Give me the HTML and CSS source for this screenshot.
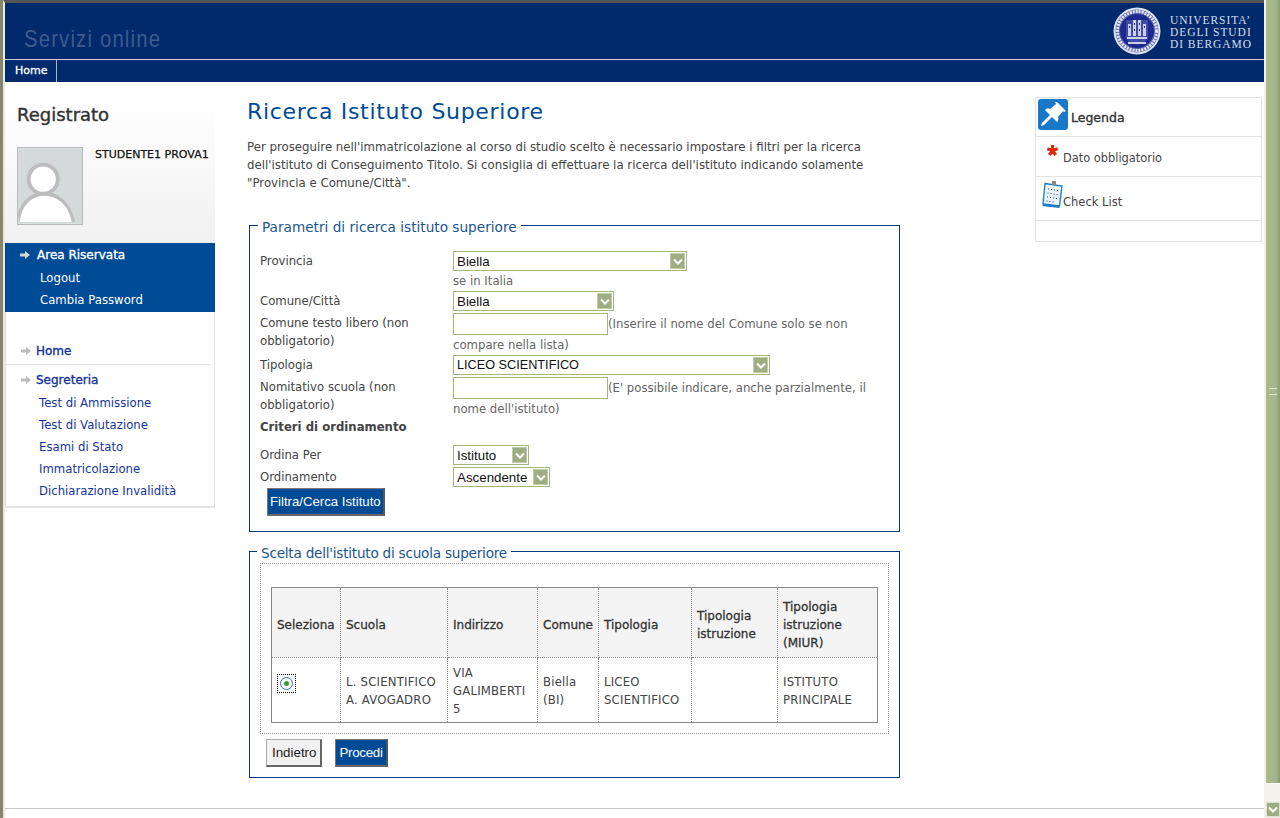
FILE: index.html
```html
<!DOCTYPE html>
<html lang="it">
<head>
<meta charset="utf-8">
<title>Ricerca Istituto Superiore</title>
<link rel="stylesheet" href="styles.css">
</head>
<body>
<div class="window">
  <div class="viewport">
    <header class="masthead">
      <div class="brand-row">
        <div class="service-name">Servizi online</div>
        <div class="uni">
          <svg class="seal" viewBox="0 0 48 48" width="48" height="48" aria-hidden="true">
            <circle cx="24" cy="24" r="23.500" fill="#dfe3f2"/>
            <circle cx="24" cy="24" r="21.500" fill="#5b64ad"/>
            <circle cx="24" cy="24" r="19.500" fill="none" stroke="#e6e8f4" stroke-width="3" stroke-dasharray="2 1"/>
            <circle cx="24" cy="24" r="17" fill="#1c2a8e"/>
            <path d="M13 13h22v17c0 4-6 6-11 8-5-2-11-4-11-8z" fill="#3e4aa3"/>
            <path d="M15 17h3v12h-3zM20 13h3v16h-3zM25 13h3v16h-3zM30 17h3v12h-3zM14 30h20v2H14zM15 35h18v2H15z" fill="#c9cee9"/>
            <path d="M16 19h1v2h-1zM21 16h1v2h-1zM26 16h1v2h-1zM31 19h1v2h-1zM21 22h1v2h-1zM26 22h1v2h-1z" fill="#1c2a8e"/>
          </svg>
          <div class="uni-name">UNIVERSITA’<br>DEGLI STUDI<br>DI BERGAMO</div>
        </div>
      </div>
      <nav class="topnav"><a class="topnav-item">Home</a></nav>
    </header>

    <div class="columns">
      <aside class="side">
        <div class="profile">
          <h2 class="profile-title">Registrato</h2>
          <div class="profile-body">
            <svg class="avatar" viewBox="0 0 66 78" width="66" height="78" aria-hidden="true">
              <rect width="66" height="78" fill="#d4d9d9"/>
              <circle cx="26" cy="32" r="15" fill="#fff" stroke="#bdbdbd" stroke-width="4"/>
              <path d="M2 76c1-17 12-27 25-27s26 10 28 27z" fill="#fff"/>
              <path d="M2 76c1-17 12-27 25-27 15 0 25 10 29 27h3C55 58 43 45 27 45 12 45 1 58 0 70z" fill="#bdbdbd"/>
            </svg>
            <div class="student">STUDENTE1 PROVA1</div>
          </div>
        </div>
        <ul class="reserved">
          <li class="reserved-head"><svg class="arrow" viewBox="0 0 10 8" width="10" height="8"><path d="M0 2.500h5V0l5 4-5 4V5.500H0z" fill="#d5d5d5"/></svg>Area Riservata</li>
          <li class="reserved-link">Logout</li>
          <li class="reserved-link">Cambia Password</li>
        </ul>
        <div class="menu">
          <div class="menu-head menu-head-home"><svg class="arrow" viewBox="0 0 10 8" width="10" height="8"><path d="M0 2.500h5V0l5 4-5 4V5.500H0z" fill="#bdbdbd"/></svg>Home</div>
          <div class="menu-head menu-head-seg"><svg class="arrow" viewBox="0 0 10 8" width="10" height="8"><path d="M0 2.500h5V0l5 4-5 4V5.500H0z" fill="#bdbdbd"/></svg>Segreteria</div>
          <a class="menu-link">Test di Ammissione</a>
          <a class="menu-link">Test di Valutazione</a>
          <a class="menu-link">Esami di Stato</a>
          <a class="menu-link">Immatricolazione</a>
          <a class="menu-link">Dichiarazione Invalidità</a>
        </div>
      </aside>

      <main class="content">
        <h1 class="page-title">Ricerca Istituto Superiore</h1>
        <p class="intro">Per proseguire nell'immatricolazione al corso di studio scelto è necessario impostare i filtri per la ricerca dell'istituto di Conseguimento Titolo. Si consiglia di effettuare la ricerca dell'istituto indicando solamente "Provincia e Comune/Città".</p>

        <fieldset class="box box-filter">
          <legend>Parametri di ricerca istituto superiore</legend>
          <div class="form-row row-prov">
            <label class="lab">Provincia</label>
            <div class="field">
              <div class="select w-234"><span>Biella</span><i class="chev"><svg viewBox="0 0 10 7" width="10" height="7"><path d="M1 1.500l4 4 4-4" fill="none" stroke="#fff" stroke-width="2"/></svg></i></div>
              <div class="hint">se in Italia</div>
            </div>
          </div>
          <div class="form-row row-com">
            <label class="lab">Comune/Città</label>
            <div class="field"><div class="select w-161"><span>Biella</span><i class="chev"><svg viewBox="0 0 10 7" width="10" height="7"><path d="M1 1.500l4 4 4-4" fill="none" stroke="#fff" stroke-width="2"/></svg></i></div></div>
          </div>
          <div class="form-row row-free">
            <label class="lab">Comune testo libero (non obbligatorio)</label>
            <div class="field hint-flow"><span class="input"></span>(Inserire il nome del Comune solo se non compare nella lista)</div>
          </div>
          <div class="form-row row-tip">
            <label class="lab">Tipologia</label>
            <div class="field"><div class="select w-317"><span>LICEO SCIENTIFICO</span><i class="chev"><svg viewBox="0 0 10 7" width="10" height="7"><path d="M1 1.500l4 4 4-4" fill="none" stroke="#fff" stroke-width="2"/></svg></i></div></div>
          </div>
          <div class="form-row row-free">
            <label class="lab">Nomitativo scuola (non obbligatorio)</label>
            <div class="field hint-flow"><span class="input"></span>(E' possibile indicare, anche parzialmente, il nome dell'istituto)</div>
          </div>
          <div class="criteria">Criteri di ordinamento</div>
          <div class="form-row row-ord">
            <label class="lab">Ordina Per</label>
            <div class="field"><div class="select w-76"><span>Istituto</span><i class="chev"><svg viewBox="0 0 10 7" width="10" height="7"><path d="M1 1.500l4 4 4-4" fill="none" stroke="#fff" stroke-width="2"/></svg></i></div></div>
          </div>
          <div class="form-row row-ord">
            <label class="lab">Ordinamento</label>
            <div class="field"><div class="select w-97"><span>Ascendente</span><i class="chev"><svg viewBox="0 0 10 7" width="10" height="7"><path d="M1 1.500l4 4 4-4" fill="none" stroke="#fff" stroke-width="2"/></svg></i></div></div>
          </div>
          <button class="btn btn-blue btn-filter" type="button">Filtra/Cerca Istituto</button>
        </fieldset>

        <fieldset class="box box-choice">
          <legend>Scelta dell'istituto di scuola superiore</legend>
          <div class="dotted">
            <table class="results">
              <thead>
                <tr><th class="c1">Seleziona</th><th class="c2">Scuola</th><th class="c3">Indirizzo</th><th class="c4">Comune</th><th class="c5">Tipologia</th><th class="c6">Tipologia istruzione</th><th class="c7">Tipologia istruzione (MIUR)</th></tr>
              </thead>
              <tbody>
                <tr>
                  <td class="radio-cell"><span class="radio"><span class="radio-ring"><span class="radio-dot"></span></span></span></td>
                  <td>L. SCIENTIFICO A. AVOGADRO</td>
                  <td>VIA GALIMBERTI 5</td>
                  <td>Biella (BI)</td>
                  <td>LICEO SCIENTIFICO</td>
                  <td></td>
                  <td>ISTITUTO PRINCIPALE</td>
                </tr>
              </tbody>
            </table>
          </div>
          <div class="actions">
            <button class="btn btn-light" type="button">Indietro</button>
            <button class="btn btn-blue" type="button">Procedi</button>
          </div>
        </fieldset>
      </main>

      <aside class="legend">
        <div class="legend-row legend-head">
          <svg class="pin" viewBox="0 0 30 31" width="30" height="31" aria-hidden="true">
            <rect width="30" height="31" rx="3" fill="#1a78c8"/>
            <path d="M19 3l9 9-2 1-1-1-5 6c1 2 0 4-1 5l-5-5-8 8-3 1 1-3 8-8-5-5c1-1 3-2 5-1l6-5-1-2z" fill="#fff"/>
          </svg>
          <span>Legenda</span>
        </div>
        <div class="legend-row legend-req">
          <svg class="star" viewBox="0 0 13 13" width="13" height="13" aria-hidden="true">
            <path d="M6.500 6.500V1M6.500 6.500L1.300 4.800M6.500 6.500l5.200-1.700M6.500 6.500L3.300 11M6.500 6.500l3.200 4.500" stroke="#e02a10" stroke-width="3.200" fill="none"/>
          </svg>
          <span>Dato obbligatorio</span>
        </div>
        <div class="legend-row legend-check">
          <svg class="clip" viewBox="0 0 21 27" width="21" height="27" aria-hidden="true">
            <path d="M3 2.500L20 5l-2.500 20L1 23z" fill="#e8f3fb" stroke="#1a78c8" stroke-width="1.300"/>
            <path d="M1 23l16.500 2-.2 2L.500 25z" fill="#1a78c8"/>
            <rect x="10" y="0" width="4" height="4" fill="#888"/>
            <path d="M6 8h1M9 8.500h1M12 9h1M15 9.500h1M5.500 12h1M8.500 12.500h1M11.500 13h1M14.500 13.500h1M5 16h1M8 16.500h1M11 17h1M14 17.500h1M4.500 20h1M7.500 20.500h1M10.500 21h1" stroke="#1a5a9a" stroke-width="1.200"/>
          </svg>
          <span>Check List</span>
        </div>
        <div class="legend-row legend-empty"></div>
      </aside>
    </div>

    <div class="foot-line"></div>
  </div>
  <div class="scrollbar">
    <div class="thumb"><span class="grip"></span></div>
    <div class="scroll-btn"><svg viewBox="0 0 10 7" width="10" height="7"><path d="M1 1.500l4 4 4-4" fill="none" stroke="#fff" stroke-width="2"/></svg></div>
  </div>
</div>
</body>
</html>
```
FILE: styles.css
```css
* { box-sizing: border-box; }
html, body { margin: 0; padding: 0; height: 100%; overflow: hidden; background: #fff; }
body { font-family: "DejaVu Sans", Tahoma, sans-serif; font-size: 11.700px; color: #444; }
.window { width: 1280px; height: 818px; display: flex; border-left: 3px solid #86866f; position: relative; }
.viewport { width: 1261px; height: 818px; flex: none; display: flex; flex-direction: column; overflow: hidden; background: #fff; border-left: 2px solid #e9e9e0; border-top: 3px solid #555; }
.masthead { background: #002a6c; height: 79px; flex: none; }
.brand-row { height: 56px; border-bottom: 1px solid #c9d1df; display: flex; justify-content: space-between; box-sizing: content-box; }
.service-name { font-family: "Liberation Sans", Arial, sans-serif; font-size: 24px; letter-spacing: 1.400px; color: #3e5c8e; margin: 22px 0 0 19px; transform: scaleX(.845); transform-origin: left top; white-space: nowrap; }
.uni { display: flex; align-items: center; gap: 9px; padding-right: 12px; }
.seal { display: block; }
.uni-name { font-family: "Liberation Serif", serif; font-size: 11.500px; line-height: 12px; letter-spacing: .95px; color: #d8dde8; padding-top: 1px; }
.topnav { height: 22px; display: flex; }
.topnav-item { border-right: 1px solid #a9b3c5; padding: 0 9px 0 10px; color: #fff; font-size: 11px; -webkit-text-stroke: .3px #fff; line-height: 22px; }
.columns { display: flex; flex: 1; align-items: flex-start; }
.side { width: 210px; flex: none; margin-top: 16px; }
.profile { height: 145px; background: linear-gradient(#fff, #f1f1f1); padding: 6px 0 0 12px; }
.profile-title { margin: 0; font-size: 18px; font-weight: 400; color: #333; line-height: 22px; -webkit-text-stroke: .4px #333; }
.profile-body { display: flex; margin-top: 21px; }
.avatar { border: 1px solid #b9b9b9; flex: none; }
.student { margin-left: 12px; font-size: 11px; color: #111; -webkit-text-stroke: .25px #111; line-height: 16px; white-space: nowrap; }
.reserved { list-style: none; margin: 0; padding: 0; background: #004b96; height: 69px; color: #fff; }
.reserved-head { font-size: 12px; -webkit-text-stroke: .35px #fff; padding: 1px 0 1px 15px; line-height: 22px; display: flex; align-items: center; gap: 7px; }
.reserved-link { padding-left: 35px; line-height: 22px; }
.menu { border: solid #e4e4e4; border-width: 0 1px 2px 1px; height: 196px; padding-top: 28px; color: #0f2a9c; }
.menu-head { display: flex; align-items: center; gap: 5px; padding-left: 15px; font-size: 12px; color: #14329a; -webkit-text-stroke: .35px #14329a; }
.menu-head-home { height: 25px; border-bottom: 1px solid #e4e4e4; margin-right: 3px; padding-bottom: 3px; }
.menu-head-seg { height: 27px; padding-top: 2px; }
.menu-link { display: block; line-height: 22px; padding-left: 33px; color: #16349c; }
.content { width: 655px; flex: none; margin-left: 32px; margin-top: 14px; }
.page-title { margin: 0; font-size: 22px; font-weight: 400; color: #004b96; line-height: 32px; letter-spacing: .7px; }
.intro { margin: 10px 0 0; font-size: 11.780px; line-height: 18px; color: #444; width: 640px; }
.box { margin: 0 0 0 2px; padding: 0; border: 1px solid #003a78; min-width: 0; width: 651px; }
.box legend { margin-left: -2px; padding: 4px 4px 0; font-size: 13.650px; color: #1b5590; line-height: 18px; }
.box-filter { margin-top: 22px; height: 318px; padding: 15px 10px 0; }
.box-choice { margin-top: 8px; height: 238px; padding: 0 10px; }
.box-choice legend { margin-left: -3px; letter-spacing: -.25px; }
.form-row { display: flex; }
.lab { width: 193px; flex: none; line-height: 18px; padding: 1px 40px 0 0; }
.field { flex: 1; color: #666; }
.row-prov { height: 40px; }
.row-com { height: 22px; }
.row-free { height: 42px; }
.row-tip { height: 22px; }
.hint { line-height: 18px; padding-top: 1px; }
.hint-flow { line-height: 21px; width: 427px; flex: none; padding-top: 1px; }
.select { height: 20px; border: 1px solid #a4b77e; background: #fff; display: flex; align-items: center; justify-content: space-between; font-family: "Liberation Sans", Arial, sans-serif; font-size: 13.330px; color: #111; padding: 0 1px 0 3px; }
.w-234 { width: 234px; } .w-161 { width: 161px; } .w-317 { width: 317px; font-size: 12.700px; } .w-76 { width: 76px; } .w-97 { width: 97px; }
.chev { width: 15px; height: 16px; background: #9fae82; border: 1px solid #c0cca9; display: flex; align-items: center; justify-content: center; flex: none; }
.input { display: inline-block; width: 155px; height: 22px; border: 1px solid #a4b77e; vertical-align: top; background: #fff; margin-top: -1px; }
.criteria { font-weight: 700; font-size: 11.700px; color: #444; line-height: 14px; height: 26px; margin-top: 1px; margin-bottom: -1px; }
.row-ord { height: 22px; }
.btn { font-family: "Liberation Sans", Arial, sans-serif; font-size: 13.330px; height: 28px; padding: 0 2px; cursor: pointer; border-style: solid; border-width: 1px 2px 2px 1px; }
.btn-blue { background: #004b96; color: #fff; border-color: #777 #555 #666 #777; }
.btn-light { background: #f1f1f1; color: #222; border-color: #aaa #666 #666 #aaa; }
.btn-filter { margin-left: 7px; margin-top: -1px; font-size: 13.200px; }
.dotted { border: 1px dotted #999; padding: 23px 10px 0; margin-top: 1px; height: 171px; }
.results { border-collapse: collapse; width: 606px; table-layout: fixed; border: 1px solid #888; }
.results th { background: #f4f4f4; height: 70px; text-align: left; padding: 5px 5px 0; color: #333; font-size: 12px; font-weight: 400; -webkit-text-stroke: .3px #333; border-right: 1px dotted #888; border-bottom: 1px dotted #888; line-height: 18px; }
.results td { height: 65px; padding: 2px 5px 0; line-height: 18px; color: #444; letter-spacing: .2px; border-right: 1px dotted #888; vertical-align: middle; }
.results td.radio-cell { padding: 0 5px 14px; }
.c1 { width: 69px; } .c2 { width: 107px; } .c3 { width: 90px; } .c4 { width: 61px; } .c5 { width: 93px; } .c6 { width: 86px; } .c7 { width: 100px; }
.radio { display: inline-flex; width: 19px; height: 19px; border: 1px dotted #000; align-items: center; justify-content: center; vertical-align: middle; }
.radio-ring { width: 13px; height: 13px; border-radius: 50%; border: 1px solid #3f6f9f; background: #fff; display: flex; align-items: center; justify-content: center; }
.radio-dot { width: 5px; height: 5px; border-radius: 50%; background: #2ea23a; }
.actions { display: flex; gap: 13px; margin: 5px 0 0 6px; }
.actions .btn-light { padding: 0 4px 0 5px; }
.actions .btn-blue { padding: 0 3px; letter-spacing: -.3px; }
.legend { width: 227px; flex: none; margin-left: 133px; margin-top: 15px; border: 1px solid #e2e2e2; }
.legend-row { border-bottom: 1px solid #e2e2e2; }
.legend-row:last-child { border-bottom: 0; }
.legend-head { height: 39px; display: flex; align-items: center; gap: 3px; padding-left: 2px; color: #333; font-size: 12.500px; -webkit-text-stroke: .35px #333; }
.pin { align-self: flex-start; margin-top: 1px; flex: none; }
.legend-req { height: 40px; display: flex; padding-left: 10px; color: #444; font-size: 11.400px; }
.star { margin-top: 7px; flex: none; }
.legend-req span { padding: 14px 0 0 4px; }
.legend-check { height: 44px; display: flex; padding-left: 6px; color: #444; font-size: 11.500px; }
.legend-check span { padding-top: 18px; }
.clip { margin-top: 4px; flex: none; }
.legend-empty { height: 20px; }
.foot-line { position: absolute; left: 2px; width: 1259px; top: 808px; height: 1px; background: #c8c8c8; }
.scrollbar { width: 16px; height: 818px; background: #f2f2ea; display: flex; flex-direction: column; justify-content: flex-end; padding-left: 2px; }
.thumb { flex: 1; background: linear-gradient(90deg, #a9ba8c, #a5b58a 70%, #8b9b70); margin-bottom: 18px; display: flex; align-items: center; justify-content: center; border-bottom: 1px solid #fff; }
.grip { display: block; width: 8px; height: 7px; border-top: 1px solid #dfe8cc; border-bottom: 1px solid #dfe8cc; }
.scroll-btn { height: 15px; background: #9fae82; border: 1px solid #dce3cc; display: flex; align-items: center; justify-content: center; margin-bottom: 1px; }
```
